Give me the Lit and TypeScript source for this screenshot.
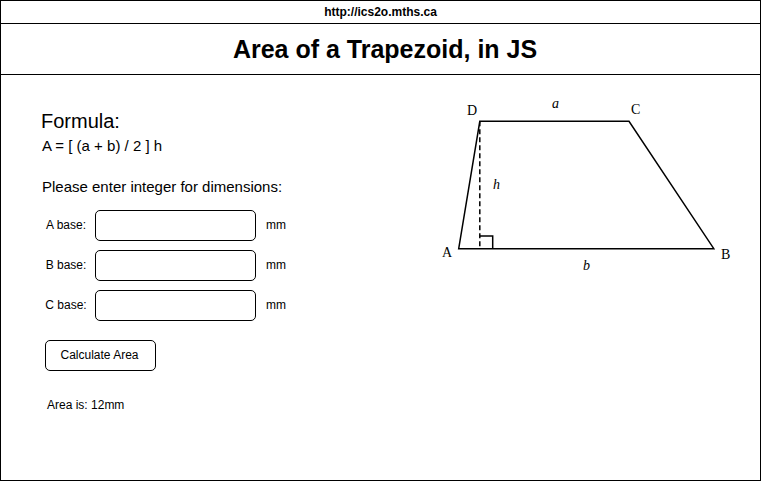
import { LitElement, html, css } from "lit";
import { customElement, state } from "lit/decorators.js";

/** Labelled drawing of trapezoid ABCD with its height. */
@customElement("trapezoid-diagram")
export class TrapezoidDiagram extends LitElement {
  static styles = css`
    :host {
      display: block;
      width: 296px;
    }
    svg {
      display: block;
      width: 100%;
    }
    .outline {
      fill: none;
      stroke: #000;
      stroke-width: 1.5;
    }
    .height {
      stroke-dasharray: 5 3;
    }
    text {
      font-family: "Liberation Serif", "Times New Roman", serif;
      font-size: 14px;
      fill: #000;
    }
    .side {
      font-style: italic;
    }
  `;

  render() {
    return html`
      <svg viewBox="0 0 296 180" role="img" aria-label="Trapezoid ABCD with bases a and b and height h">
        <path class="outline" d="M39.8 26.3H189L273.8 153.7H18.7Z" />
        <path class="outline height" d="M39.8 26.3V153.7" />
        <path class="outline" d="M39.8 141H52.7V153.7" />
        <text x="27" y="20">D</text>
        <text x="191" y="19">C</text>
        <text x="2" y="162">A</text>
        <text x="281" y="164">B</text>
        <text class="side" x="112" y="13">a</text>
        <text class="side" x="143" y="175">b</text>
        <text class="side" x="53" y="94">h</text>
      </svg>
    `;
  }
}

@customElement("app-root")
export class AppRoot extends LitElement {
  @state() private area = 12;

  private fields = [
    { id: "a", label: "A base:" },
    { id: "b", label: "B base:" },
    { id: "c", label: "C base:" },
  ];

  static styles = css`
    * {
      box-sizing: border-box;
    }
    :host {
      display: flex;
      flex-direction: column;
      min-height: 100vh;
      box-sizing: border-box;
      margin-right: 1px;
      border: 1px solid #000;
      background: #fff;
      color: #000;
      font-family: "Liberation Sans", Arial, sans-serif;
      font-size: 12px;
      line-height: 20px;
    }
    h1,
    h2,
    p {
      margin: 0;
      font-weight: normal;
    }
    .address {
      padding: 1px 0;
      border-bottom: 1px solid #000;
      text-align: center;
      font-weight: bold;
    }
    .title {
      padding: 10px 0 10px 9px;
      border-bottom: 1px solid #000;
      text-align: center;
      font-size: 25px;
      line-height: 30px;
      font-weight: bold;
    }
    main {
      display: flex;
      justify-content: space-between;
      align-items: flex-start;
      padding: 20px 24px 20px 40px;
    }
    .calculator {
      padding-top: 14px;
    }
    .heading {
      padding-bottom: 1px;
      font-size: 20px;
      line-height: 24px;
    }
    .text {
      padding-left: 1px;
      font-size: 15px;
      line-height: 24px;
    }
    form {
      display: grid;
      justify-items: start;
      padding-left: 4px;
    }
    .text + .text {
      margin-top: 17px;
    }
    .fields {
      display: grid;
      grid-template-columns: 42px 161px auto;
      column-gap: 8px;
      row-gap: 9px;
      align-items: center;
      margin: 11px 0 19px;
    }
    label {
      padding-bottom: 2px;
      text-align: center;
      white-space: nowrap;
    }
    input,
    button {
      height: 31px;
      border: 1px solid #000;
      border-radius: 5px;
      background: #fff;
      color: inherit;
      font: inherit;
    }
    input {
      width: 100%;
      padding: 0 8px;
    }
    button {
      width: 111px;
      padding: 0 2px 2px 0;
    }
    .unit {
      padding: 0 0 2px 2px;
    }
    .result {
      display: block;
      margin-top: 24px;
      padding-left: 2px;
    }
  `;

  private calculate(event: Event) {
    event.preventDefault();
    const data = new FormData(event.target as HTMLFormElement);
    const [a, b, h] = this.fields.map((field) => Number(data.get(field.id)));
    this.area = ((a + b) / 2) * h;
  }

  render() {
    return html`
      <header>
        <p class="address">http://ics2o.mths.ca</p>
        <h1 class="title">Area of a Trapezoid, in JS</h1>
      </header>
      <main>
        <section class="calculator">
          <h2 class="heading">Formula:</h2>
          <p class="text">A = [ (a + b) / 2 ] h</p>
          <p class="text">Please enter integer for dimensions:</p>
          <form @submit=${this.calculate}>
            <div class="fields">
              ${this.fields.map(
                (field) => html`
                  <label for=${field.id}>${field.label}</label>
                  <input id=${field.id} name=${field.id} type="text" inputmode="numeric" />
                  <span class="unit">mm</span>
                `
              )}
            </div>
            <button type="submit">Calculate Area</button>
            <output class="result">Area is: ${this.area}mm</output>
          </form>
        </section>
        <trapezoid-diagram></trapezoid-diagram>
      </main>
    `;
  }
}
